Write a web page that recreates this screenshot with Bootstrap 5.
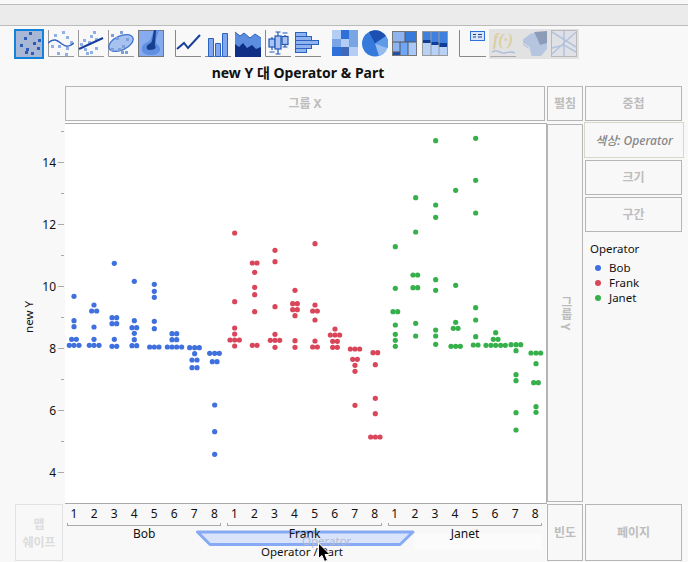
<!DOCTYPE html>
<html lang="ko">
<head>
<meta charset="utf-8">
<title>Graph Builder</title>
<link href="https://cdn.jsdelivr.net/npm/bootstrap@5.3.0/dist/css/bootstrap.min.css" rel="stylesheet">
<style>
html,body{height:562px;overflow:hidden;background:#f8f8f8;}
body{font-family:"Noto Sans","Noto Sans CJK KR",sans-serif;font-size:12px;line-height:1.2;color:#111;}
.topgap{height:4px;}
.topband{height:22px;background:#ebebeb;border-top:1px solid #bbb;border-bottom:1px solid #bbb;}
.tool{padding-left:14px;height:33px;padding-top:3px;}
.tool svg{display:block;flex:none;margin-right:4px;margin-top:1px;}
.tool svg.first{margin-top:0;}
.tool svg.endgrp{margin-right:11px;}
.tool .off{background:#e2e2e2;width:90px;height:30px;margin-left:-1px;padding:0 0 0 1px;}
.tool .off svg{margin-right:6px;}
.tool .off svg.mid{margin-right:3px;}
.gbtitle{width:596px;height:27px;padding-top:1px;font-family:"Noto Sans","Noto Sans CJK KR",sans-serif;font-size:14px;}
.gbgrid{display:grid;grid-template-columns:65px 482px 38px 103px;grid-template-rows:36px 382px 58px;}
.zone{border:1px solid #b6b6b6;color:#bdbdbd;font-weight:700;font-size:12px;padding-top:2px;}
.zx{margin-right:2px;height:35px;}
.zwrap{height:35px;width:36px;}
.zr{width:97px;height:35px;}
.zcol{width:100px;height:36px;margin-left:-1px;border-color:#d8d8c8;color:#858585;font-style:italic;font-weight:500;white-space:nowrap;}
.zy{writing-mode:vertical-rl;width:36px;height:378px;margin-top:2px;padding-top:0;}
.zmap{margin-left:15px;width:48px;height:57px;border-color:#e2e2e2;color:#dcdcdc;text-align:center;line-height:18px;}
.zf{width:36px;height:57px;}
.zp{width:97px;height:57px;}
.stack{gap:2px;}
.legend{padding:7px 0 0 5px;font-size:11.5px;}
.legend .ln{height:15px;line-height:15px;gap:8px;padding-left:5px;}
.legend .ttl{height:19px;line-height:15px;}
.ldot{width:6px;height:6px;border-radius:50%;flex:none;}
.plot{background:#fff;height:382px;}
.plot svg,.yax svg{display:block;}
.xcell{position:relative;margin-left:-1px;width:483px;height:58px;}
.xflow{position:relative;z-index:1;}
.xgrp{width:160.4px;}
.xnums{display:grid;grid-template-columns:repeat(8,1fr);text-align:center;padding-top:2px;height:19px;line-height:15px;}
.xbrk{height:3px;margin:0 3px;border:1px solid #aaa;border-top:0;}
.xname{text-align:center;line-height:15px;height:16px;}
.xtitle{text-align:center;padding-right:7px;line-height:14px;font-size:11.5px;position:relative;z-index:1;margin-top:3px;}
.ghost{position:absolute;z-index:1;left:238px;top:30px;color:#b3bbd0;line-height:14px;font-size:11.5px;}
.trap{position:absolute;left:0;top:0;z-index:0;display:block;}
.cursor{position:absolute;left:0;top:0;z-index:2;display:block;}
.fglyph{font-family:"Liberation Serif",serif;font-style:italic;font-weight:700;font-size:16px;fill:#dccf9f;}
</style>
</head>
<body>
<div class="topgap"></div>
<div class="topband"></div>
<div class="tool d-flex align-items-start">
  <svg class="first" width="30" height="30" viewBox="0 0 30 30"><rect x="1" y="1" width="28" height="28" fill="#a9b7d6" stroke="#1283da" stroke-width="2"/><path fill="#2a5cb8" d="M15 3h3v3h-3zM10 8h3v3h-3zM19 13h3v3h-3zM24 10h3v3h-3zM6 15h3v3H6zM12 19h3v3h-3zM23 18h3v3h-3zM17 23h3v3h-3zM11 22h3v3h-3z"/></svg>
  <svg width="26" height="28" viewBox="0 0 26 28"><path d="M.5 0v26.500H26" fill="none" stroke="#999"/><path fill="#8fb0e6" d="M6 4h3v3H6zM14 1h3v3h-3zM18 6h3v3h-3zM22 11h3v3h-3zM3 15h3v3H3zM10 15h3v3h-3zM18 17h3v3h-3zM9 22h3v3H9zM17 23h3v3h-3z"/><path d="M0 13c6-6 10-2 14 1s7 3 12-1" fill="none" stroke="#2f62bf" stroke-width="1.500"/></svg>
  <svg width="26" height="28" viewBox="0 0 26 28"><path d="M.5 0v26.500H26" fill="none" stroke="#999"/><path fill="#8fb0e6" d="M12 5h3v3h-3zM15 1h3v3h-3zM5 9h3v3H5zM17 8h3v3h-3zM2 13h3v3H2zM10 11h3v3h-3zM6 18h3v3H6zM17 17h3v3h-3zM8 22h3v3H8zM12 21h3v3h-3z"/><path d="M1 19L25 8" stroke="#16409c" stroke-width="2"/></svg>
  <svg width="26" height="28" viewBox="0 0 26 28"><path d="M.5 0v26.500H26" fill="none" stroke="#999"/><ellipse cx="13" cy="13" rx="13" ry="7" transform="rotate(-25 13 13)" fill="#a8c2f0" stroke="#3c74d4" stroke-width="1.300"/><path fill="#7f9fd8" d="M3 4h3v3H3zM8 7h3v3H8zM12 1h3v3h-3zM14 15h3v3h-3zM18 8h3v3h-3zM3 18h3v3H3zM10 18h3v3h-3zM13 21h3v3h-3zM17 21h3v3h-3z"/></svg>
  <svg class="endgrp" width="26" height="28" viewBox="0 0 26 28"><rect x=".5" y=".5" width="25" height="26" fill="#86abee" stroke="#777"/><path d="M12 25c-6 0-9-3-8-8 1-4 6-4 8-7 2-3 2-6 4-10h5c-1 4-3 8-3 11-1 3 4 4 4 8s-4 6-10 6z" fill="#5f8fe0"/><path d="M12 20c-3 0-4-2-3-4 1-2 4-2 5-5l2-11h2l-1 13c-.5 3 1 3 .5 5-.5 1-3 2-5.500 2z" fill="#173f8f"/></svg>

  <svg width="26" height="28" viewBox="0 0 26 28"><path d="M.5 0v26.500H26" fill="none" stroke="#888"/><path d="M2 19l7-6 4 5L25 5" fill="none" stroke="#16409c" stroke-width="2"/></svg>
  <svg width="26" height="28" viewBox="0 0 26 28"><path d="M0 26.500h26" stroke="#888"/><path fill="#7fa8ef" stroke="#2d62c1" d="M3.500 8.500h5v18h-5zM10.500 13.500h5v13h-5zM17.500 3.500h5v23h-5z"/></svg>
  <svg width="26" height="28" viewBox="0 0 26 28"><path d="M0 2l5 4 4-3 6 5 5-4 6 4v19H0z" fill="#5d8ddf"/><path d="M0 14l4 3 4-4 4 5 5-3 4 4 5-2v10H0z" fill="#0f2f86"/><path d="M0 2l5 4 4-3 6 5 5-4 6 4" fill="none" stroke="#2d62c1"/></svg>
  <svg width="26" height="28" viewBox="0 0 26 28"><path d="M.5 0v26.500H26" fill="none" stroke="#888"/><g fill="#a9c4f2" stroke="#2456b4" stroke-width="1.200"><path d="M7 7v13M13 2v22M20 5v12" fill="none"/><rect x="4" y="9" width="6" height="8"/><rect x="10" y="6" width="6" height="13"/><rect x="17" y="6.500" width="6" height="8"/><path d="M4.500 22h5M10.500 2h5M10.500 24h5M17.500 3h5M17.500 17h5" fill="none"/></g></svg>
  <svg class="endgrp" width="26" height="28" viewBox="0 0 26 28"><path d="M0 26.500h26" stroke="#888"/><g fill="#8fb3ef" stroke="#2d62c1"><rect x=".5" y="2.500" width="11" height="4"/><rect x=".5" y="6.500" width="16" height="4"/><rect x=".5" y="10.500" width="23" height="4"/><rect x=".5" y="14.500" width="16" height="4"/><rect x=".5" y="18.500" width="11" height="4"/></g></svg>

  <svg width="26" height="28" viewBox="0 0 26 28"><rect width="26" height="26" fill="#8fb0ea"/><path fill="#b4cdf4" d="M0 0h9v9H0zM9 9h8v8H9zM17 17h9v9h-9z"/><path fill="#2f6fd8" d="M9 0h8v9H9zM0 17h9v9H0z"/><path fill="#7aa5e5" d="M17 0h9v9h-9zM17 9h9v8h-9zM0 9h9v8H0z"/><path fill="#3f68b8" d="M9 17h8v9H9z"/></svg>
  <svg width="26" height="28" viewBox="0 0 26 28"><circle cx="13" cy="13.500" r="13" fill="#367bdc"/><path d="M13 13.500L7 2c6-3 13-2 17 4z" fill="#1c4fb0"/><path d="M13 13.500L24 6c3 4 3 8 1.500 12z" fill="#5f9ae8"/><path d="M13 13.500l12.500 4.500c-1.500 4-5 7-8.500 8z" fill="#94bbf2"/></svg>
  <svg width="26" height="28" viewBox="0 0 26 28"><rect x=".5" y="1.500" width="24" height="24" fill="#8fb3ef" stroke="#777"/><path fill="#367bdc" d="M13 2h11v10H13z"/><path fill="#6ea7f8" d="M8 12h8v13H8z"/><path fill="#a8c8f8" d="M16 12h8v13h-8z"/><path fill="#1c4fb0" d="M1 22h7v3H1z"/><path d="M1 12h23M13 2v10M8 12v13M16 12v13M1 22h7" stroke="#555" fill="none"/></svg>
  <svg class="endgrp" width="26" height="28" viewBox="0 0 26 28"><rect x=".5" y="1.500" width="25" height="24" fill="#b7d1f7" stroke="#9a9a9a"/><path fill="#3f7fdd" d="M1 2h8v8H1zM9 2h8v10H9zM17 2h8v13H17z"/><path fill="#0f3d9a" d="M1 10h8v3H1zM9 12h8v3H9zM17 13h8v4h-8z"/><path d="M9 2v23M17 2v23" stroke="#9a9a9a"/></svg>

  <svg class="capicon" width="27" height="28" viewBox="0 0 27 28"><path d="M.5 0v26.500H27" fill="none" stroke="#888"/><rect x="11" y="1" width="15" height="10" fill="#2f6fd8"/><rect x="12" y="2" width="13" height="8" fill="#dbe6fb"/><path d="M14 4h3v1h-3zM14 6.500h3v1h-3zM19 4h4v1h-4zM19 6.500h4v1h-4z" fill="#163f95"/></svg>
  <div class="off d-flex">
    <svg width="26" height="28" viewBox="0 0 26 28"><text class="fglyph" x="3" y="15">f(·)</text><path d="M2 22c5-4 8 2 13 1s6-2 10 0" fill="none" stroke="#a9bbdc" stroke-width="1.300"/><path d="M.5 26.500H26" stroke="#aaa"/></svg>
    <svg class="mid" width="26" height="28" viewBox="0 0 26 28"><path d="M1 9l8-6 8 1 8-3v18l-6 7H9l-2-7-6-4z" fill="#b6c5df"/><path d="M12 2l13-1v12l-7 2-3-7z" fill="#8c9cb8"/><path d="M1 9l8-6M1 13l6 4 2 9" fill="none" stroke="#e2e2e2"/></svg>
    <svg width="26" height="28" viewBox="0 0 26 28"><rect x=".5" y=".5" width="25" height="26" fill="#dfe1e6" stroke="#b9b9b9"/><path d="M1 2l24 15M1 24l24-22M1 18l12-3 12 7M13 1v25" fill="none" stroke="#b3c3de" stroke-width="1.500"/></svg>
  </div>
</div>
<div class="gbtitle d-flex align-items-center justify-content-center fw-bold">new Y 대 Operator &amp; Part</div>

<div class="gbgrid">
  <div></div>
  <div class="zone zx d-flex align-items-center justify-content-center">그룹 X</div>
  <div class="zone zwrap d-flex align-items-center justify-content-center">펼침</div>
  <div class="zone zr d-flex align-items-center justify-content-center">중첩</div>

  <div class="yax">
    <svg width="65" height="382" viewBox="0 122 65 382" font-size="12" fill="#111">
      <g stroke="#aaa"><path d="M58 162.500h6M58 224.500h6M58 286.500h6M58 348.500h6M58 410.500h6M58 472.500h6M61 131.500h3M61 193.500h3M61 255.500h3M61 317.500h3M61 379.500h3M61 441.500h3"/></g>
      <g text-anchor="end"><text x="56" y="166.500">14</text><text x="56" y="228.500">12</text><text x="56" y="290.500">10</text><text x="56" y="352.500">8</text><text x="56" y="414.500">6</text><text x="56" y="476.500">4</text></g>
      <text transform="translate(33 317) rotate(-90)" text-anchor="middle" font-size="11.500">new Y</text>
    </svg>
  </div>
  <div class="plot"><svg id="plotsvg" width="482" height="382" viewBox="65 122 482 382"><path d="M64.500 123.500H547M64.500 123v381M64 503.500h483" fill="none" stroke="#aaa"/><path d="M547 123v381" stroke="#b4b4b4" stroke-width="2"/></svg></div>
  <div class="zone zy d-flex align-items-center justify-content-center">그룹 Y</div>
  <div class="d-flex flex-column stack">
    <div class="zone zcol d-flex align-items-center justify-content-center">색상: Operator</div>
    <div class="zone zr d-flex align-items-center justify-content-center">크기</div>
    <div class="zone zr d-flex align-items-center justify-content-center">구간</div>
    <div class="legend">
      <div class="ttl">Operator</div>
      <div class="ln d-flex align-items-center"><span class="ldot" style="background:#3f70dd"></span>Bob</div>
      <div class="ln d-flex align-items-center"><span class="ldot" style="background:#d9465a"></span>Frank</div>
      <div class="ln d-flex align-items-center"><span class="ldot" style="background:#35b04b"></span>Janet</div>
    </div>
  </div>

  <div class="zone zmap d-flex align-items-center justify-content-center">맵<br>쉐이프</div>
  <div class="xcell">
    <svg class="trap" width="483" height="58" viewBox="64 504 483 58"><rect x="414" y="534" width="128" height="16" fill="#fbfbfb"/><path d="M197.500 532H413l-13 12.500H210z" fill="#d9e3fb" stroke="#86aaf4" stroke-width="3" stroke-linejoin="round"/></svg>
    <div class="xflow d-flex" id="xflow"></div>
    <div class="xtitle">Operator / Part</div>
    <div class="ghost">Operator</div>
    <svg class="cursor" width="483" height="58" viewBox="64 504 483 58"><path d="M318.500 543v15.500l3.500-3 2.500 6 3-1.200-2.500-5.800h5z" fill="#000" stroke="#fff"/></svg>
  </div>
  <div class="zone zf d-flex align-items-center justify-content-center">빈도</div>
  <div class="zone zp d-flex align-items-center justify-content-center">페이지</div>
</div>

<script>
(function(){
  var S=[
   ['#3f70dd',60,280,[[49,42],[122,42],[140,42],[178,35,49],[196,28,42,57],
     [75,102],[93,95,110],[141,102],[178,102],[196,88,102,117],
     [-50,163],[113,156,170],[131,156,170],[178,163],[199,156,170],
     [4,223],[122,223],[143,216,230],[160,223],[179,223],[197,216,230],
     [13,283],[34,283],[52,283],[124,283],[146,283],[201,269,283,297],
     [161,336,350],[179,336,350],[201,322,336,350,365],
     [203,389,404,418],[221,404],[240,396,411],[263,396,411],
     [220,449,464,478],[245,457,471],[375,464],[455,464],[523,464]]],
   ['#d9465a',220,220,[[39,44],[245,44],[324,44],[342,44],[360,30,44,58],[378,44],
     [129,97,111],[157,104],[202,104],[224,104],[275,104],[376,97,111],
     [91,165],[125,165],[260,165],[343,165],[361,151,165,179],[382,165],
     [211,225],[251,218,232],[269,218,232],[287,225],[362,225],[382,225],
     [71,285],[255,285],[273,278,292],[300,285],[363,285],[381,278,292],
     [327,345],[345,331,345,359],[364,338,352],[382,338,352],
     [387,391,405,419],[418,398,412],[436,405],[454,405],[556,405],
     [398,459,473],[434,466],[535,466],[581,466],[651,452,466,480]]],
   ['#35b04b',380,130,[[350,46],[475,46],[203,107],[306,107],[435,99,113],[473,99,113],
     [32,167],[225,167],[262,167],[449,167],[481,167],[181,227],[466,227],[25,287],[151,287],[249,287]]],
   ['#35b04b',380,290,[[65,39,53],[105,46],[133,46],[151,46],[169,46],[100,107],[138,107],
     [120,167],[138,167],[163,167],[97,227],[115,220,234],[169,213,227,241],
     [53,287],[90,287],[140,287],[165,280,294],
     [128,347],[148,340,354],[166,318,333,347,362,376],
     [164,393,408,422],[182,408],[254,408],[272,408],[368,408],[420,408],
     [189,453,468,482],[221,468],[278,461,475],[350,468],[367,468]]]
  ];
  var svg=document.getElementById('plotsvg'),NS='http://www.w3.org/2000/svg';
  S.forEach(function(s){s[3].forEach(function(r){for(var i=1;i<r.length;i++){
    var c=document.createElementNS(NS,'circle');
    c.setAttribute('cx',s[1]+r[i]/3);c.setAttribute('cy',s[2]+r[0]/3);c.setAttribute('r',2.6);c.setAttribute('fill',s[0]);svg.appendChild(c);
  }});});
  var x=document.getElementById('xflow');
  ['Bob','Frank','Janet'].forEach(function(n){
    var g=document.createElement('div');g.className='xgrp';
    var h='<div class="xnums">';for(var i=1;i<=8;i++)h+='<span>'+i+'</span>';
    h+='</div><div class="xbrk"></div><div class="xname">'+n+'</div>';
    g.innerHTML=h;x.appendChild(g);
  });
})();
</script>
<script src="https://cdn.jsdelivr.net/npm/bootstrap@5.3.0/dist/js/bootstrap.bundle.min.js"></script>
</body>
</html>
